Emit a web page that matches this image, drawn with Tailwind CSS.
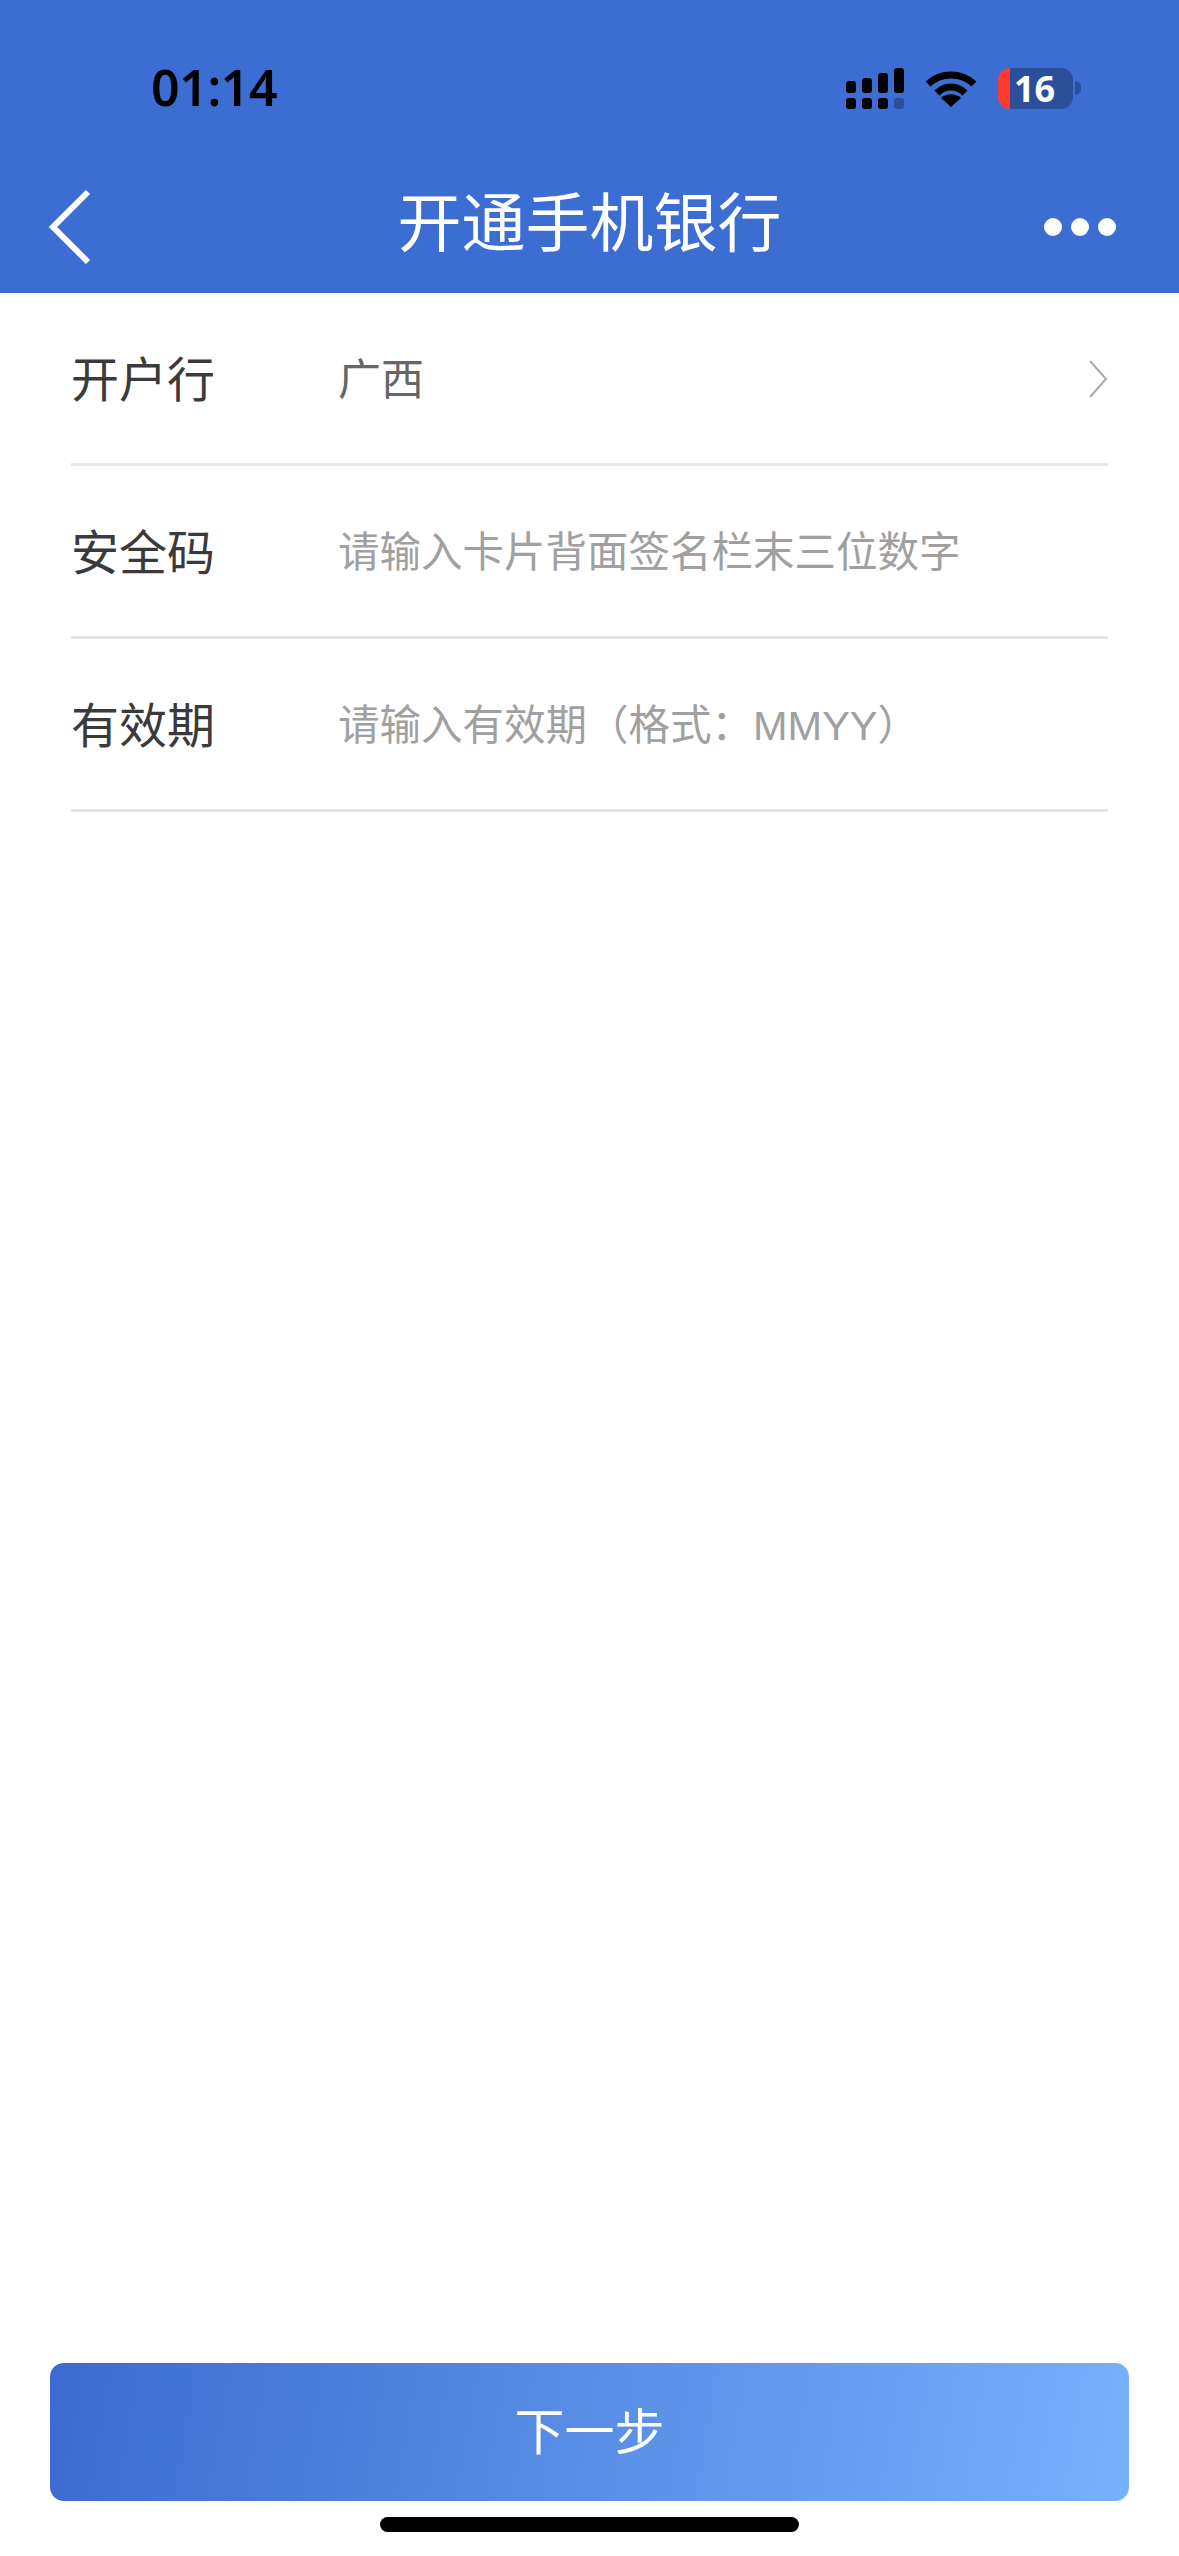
<!DOCTYPE html>
<html lang="zh-CN">
<head>
  <meta charset="UTF-8" />
  <meta name="viewport" content="width=device-width, initial-scale=1.0"/>
  <title>开通手机银行</title>
  <script src="https://cdn.jsdelivr.net/npm/@tailwindcss/browser@4"></script>
</head>
<body class="bg-white font-['Liberation_Sans','Noto_Sans_CJK_SC',sans-serif]">
  <div class="flex flex-col w-[1179px] h-[2556px] overflow-hidden">

    <!-- status bar + nav -->
    <header class="h-[293px] bg-[#3c6dd3] flex flex-col shrink-0">
      <div class="h-[64px] mt-[56px] flex items-center pl-[151px] pr-[98px]">
        <span class="text-[50px] leading-none font-semibold text-black tracking-[-0.4px] -translate-y-[1px] font-['Noto_Sans',sans-serif]">01:14</span>
        <div class="ml-auto flex items-center">
          <svg class="w-[58px] h-[41px]" viewBox="0 0 58 41" fill="#000">
            <rect x="0" y="13" width="10" height="12" rx="3"/>
            <rect x="16" y="10" width="10" height="15" rx="3"/>
            <rect x="32" y="5" width="10" height="20" rx="3"/>
            <rect x="48" y="0" width="10" height="25" rx="3"/>
            <rect x="0" y="30" width="10" height="11" rx="3"/>
            <rect x="16" y="30" width="10" height="11" rx="3"/>
            <rect x="32" y="30" width="10" height="11" rx="3"/>
            <rect x="48" y="30" width="10" height="11" rx="3" fill="#2c4f9c"/>
          </svg>
          <svg class="w-[52px] h-[38px] ml-[21px]" viewBox="0 0 52 38" fill="none" stroke="#000">
            <path d="M3 15 C16 3 36 3 49 15" stroke-width="7"/>
            <path d="M12 24 C20 16 32 16 40 24" stroke-width="7"/>
            <path d="M26 38 L16 29 C22 24 30 24 36 29 Z" fill="#000" stroke="none"/>
          </svg>
          <div class="ml-[21px] flex items-center">
            <div class="w-[75px] h-[41px] flex">
              <div class="w-[12px] bg-[#ff3b30] rounded-l-[12px]"></div>
              <span class="flex-1 pl-[4px] bg-[#2c4f9c] rounded-r-[12px] text-left text-white text-[36px] leading-[41px] font-bold font-['Noto_Sans',sans-serif]">16</span>
            </div>
            <div class="w-[6px] h-[14px] ml-[2px] bg-[#2c4f9c] rounded-r-full"></div>
          </div>
        </div>
      </div>
      <div class="relative flex-1 flex items-center justify-center pt-[35px]">
        <svg class="absolute left-[47px] top-[68px] w-[46px] h-[78px]" viewBox="0 0 46 78" fill="none" stroke="#fff" stroke-width="6">
          <path d="M41 4 L6 39 L41 74"/>
        </svg>
        <h1 class="text-[64px] leading-none font-normal text-white">开通手机银行</h1>
        <div class="absolute left-[1044px] top-[98px] flex gap-[9px]">
          <span class="w-[18px] h-[18px] rounded-full bg-white"></span>
          <span class="w-[18px] h-[18px] rounded-full bg-white"></span>
          <span class="w-[18px] h-[18px] rounded-full bg-white"></span>
        </div>
      </div>
    </header>

    <!-- form -->
    <main class="mx-[71px] flex flex-col">
      <div class="h-[173px] pt-[5px] border-b-[3px] border-[#e6e6e6] flex items-center">
        <span class="w-[267px] text-[48px] text-[#3a3a3a]">开户行</span>
        <span class="text-[43px] text-[#666]">广西</span>
        <svg class="ml-auto w-[20px] h-[38px] -translate-y-[2px]" viewBox="0 0 20 38" fill="none" stroke="#aaa" stroke-width="2">
          <path d="M2 1 L18 19 L2 37"/>
        </svg>
      </div>
      <div class="h-[173px] pt-[5px] border-b-[3px] border-[#e6e6e6] flex items-center">
        <span class="w-[267px] text-[48px] text-[#3a3a3a]">安全码</span>
        <span class="text-[41.5px] text-[#a0a0a0]">请输入卡片背面签名栏末三位数字</span>
      </div>
      <div class="h-[173px] pt-[5px] border-b-[3px] border-[#e6e6e6] flex items-center">
        <span class="w-[267px] text-[48px] text-[#3a3a3a]">有效期</span>
        <span class="text-[41.5px] text-[#a0a0a0]">请输入有效期（格式：MMYY）</span>
      </div>
    </main>

    <!-- bottom button -->
    <div class="mt-auto flex flex-col items-center">
      <button class="w-[1079px] h-[138px] pt-[3px] rounded-[14px] bg-[linear-gradient(100deg,#3b6bd1,#78b0fb)] text-white text-[50px]">下一步</button>
      <div class="w-[419px] h-[15px] mt-[16px] mb-[24px] rounded-full bg-black"></div>
    </div>
  </div>
</body>
</html>
